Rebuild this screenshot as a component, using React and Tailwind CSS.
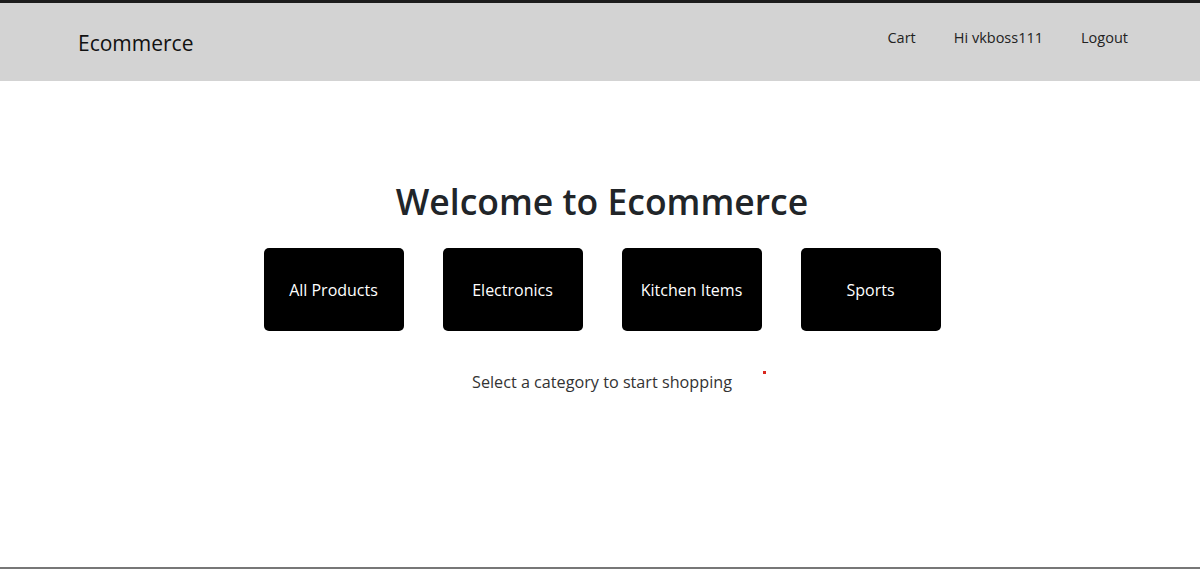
import React from "react";

export default function App() {
  const cats = ["All Products", "Electronics", "Kitchen Items", "Sports"];
  return (
    <div
      className="relative flex h-[569px] flex-col overflow-hidden border-t-[3px] border-b-2 border-t-[#1c1c1c] border-b-[#777777] bg-white text-[#212529]"
      style={{ fontFamily: '"Open Sans", "Noto Sans", sans-serif' }}
    >
      <nav className="flex h-[78px] items-center justify-between bg-[#d3d3d3] pl-[78px] pr-[72px]">
        <div className="mt-[3px] text-[21px] text-[#111]">Ecommerce</div>
        <div className="-mt-[8px] flex items-center gap-[38px] text-[14.5px] text-[#222]">
          <span>Cart</span>
          <span>Hi vkboss111</span>
          <span>Logout</span>
        </div>
      </nav>
      <main className="flex flex-col items-center pl-[4px] pt-[96px]">
        <h1 className="text-[35.5px] font-semibold leading-[48px] text-[#212529]">
          Welcome to Ecommerce
        </h1>
        <div className="mt-[23px] flex gap-[39px]">
          {cats.map((c) => (
            <button
              key={c}
              className="flex h-[83px] w-[140px] items-center justify-center rounded-[5px] bg-black text-[16px] text-white"
            >
              {c}
            </button>
          ))}
        </div>
        <p className="mt-[39px] text-[16.2px] text-[#333]">Select a category to start shopping</p>
      </main>
      <span className="absolute left-[763px] top-[368px] h-[3px] w-[3px] bg-[#d9271e]" />
    </div>
  );
}
